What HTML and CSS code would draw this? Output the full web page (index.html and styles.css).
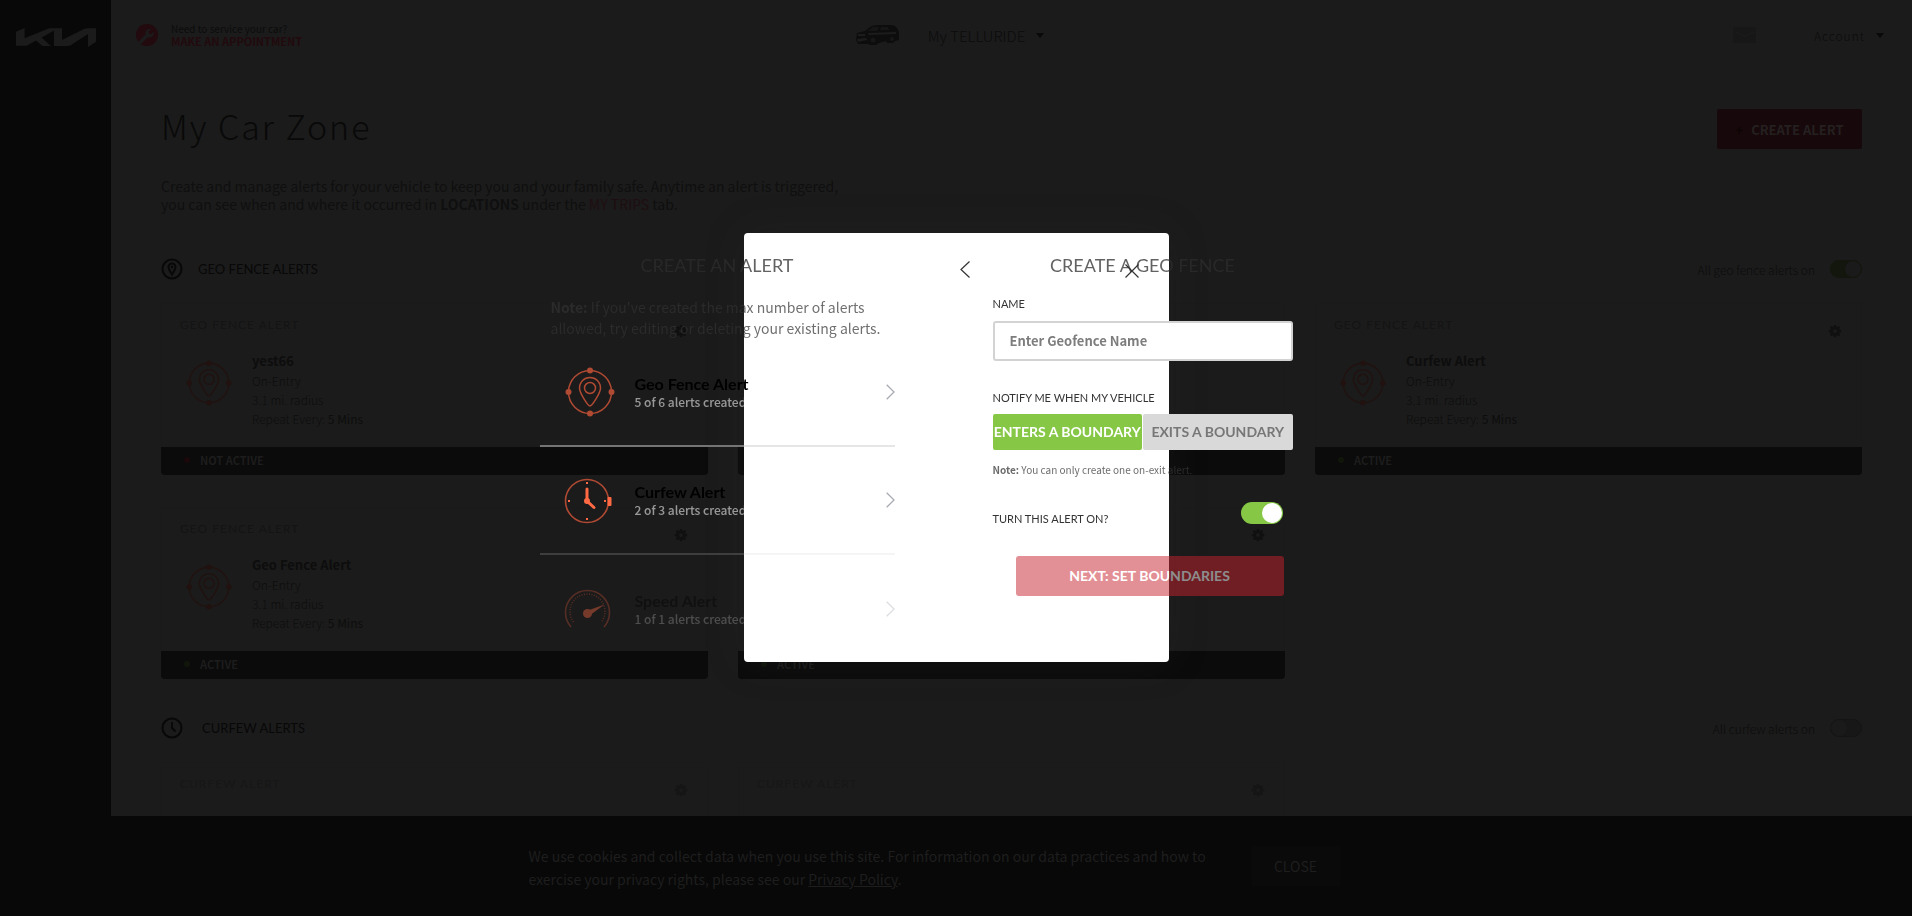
FILE: index.html
```html
<!DOCTYPE html>
<html lang="en">
<head>
<meta charset="utf-8">
<title>My Car Zone</title>
<link rel="stylesheet" href="styles.css">
</head>
<body>
<svg class="sprite" aria-hidden="true">
  <symbol id="gear" viewBox="0 0 16 16"><path fill="currentColor" fill-rule="evenodd" d="M6.800 1h2.400l.300 1.900 1.100.500 1.600-1.200 1.700 1.700-1.200 1.600.500 1.100 1.900.300v2.400l-1.900.300-.500 1.100 1.200 1.600-1.700 1.700-1.600-1.200-1.100.500-.300 1.900H6.800l-.300-1.900-1.100-.500-1.600 1.200-1.700-1.700 1.200-1.600-.500-1.100L.900 9.300V6.900l1.900-.300.500-1.100-1.200-1.600 1.700-1.700 1.600 1.200 1.100-.500zM8 5.900a2.200 2.200 0 1 0 0 4.400 2.200 2.200 0 0 0 0-4.400z"/></symbol>
  <symbol id="fence" viewBox="0 0 50 50"><g fill="none" stroke="currentColor" stroke-width="1.500"><circle cx="25" cy="25" r="21.500"/><path d="M25 39C23 39 14.500 26 14.500 21a10.500 10.500 0 0 1 21 0C35.500 26 27 39 25 39z"/><circle cx="25" cy="21" r="5.500"/></g><g class="dots"><circle cx="25" cy="3.500" r="3"/><circle cx="25" cy="46.500" r="3"/><circle cx="3.500" cy="25" r="3"/><circle cx="46.500" cy="25" r="3"/></g></symbol>
</svg>

<div class="page">
  <aside class="sidebar">
    <svg class="logo" viewBox="0 0 80 20" role="img" aria-label="Kia"><path fill="currentColor" d="M0 3.700 8.600 0V10.300L32 .700Q33 .300 34 .300H46V12L68 1Q70 .300 72 .300H80V13.700L72 19V6L55 17Q53.500 18 52 18H38V2.500L25.700 9.500 34.700 18H26.500L20 12.500 12 17Q11 17.700 10 17.700H0z"/></svg>
  </aside>
  <div class="body">
    <header class="top">
      <div class="service">
        <svg class="wrench" viewBox="0 0 22 22"><circle cx="11" cy="11" r="11" fill="#220a0e"/><path d="M2 18 9.500 10.500A4.500 4.500 0 0 1 15 5l-2.500 2.700.500 2 2 .500 2.700-2.500A4.500 4.500 0 0 1 12 13.200L4.500 20.500z" fill="#1b1b1b"/></svg>
        <div><p class="need">Need to service your car?</p><a href="#" class="appt">MAKE AN APPOINTMENT</a></div>
      </div>
      <button class="vehicle" type="button">
        <svg class="car" viewBox="0 0 44 20"><path fill="#0d0d0d" d="M1 8 9 6 14 2Q17 0 22 0H35Q39 0 41 3L43 7V15L39 16 37 18H31L30 16 23 18 20 20H14L12 19 2 19 0 15z"/><path fill="#1c1c1c" d="M2 9H9V11H2zM1 14 10 13 11 15 2 17zM12 8 40 7V9L13 10z"/><path fill="#161616" d="M12 6 17 2H23L21 6zM25 2H32L33 5H24z"/><circle cx="17" cy="15" r="2.500" fill="#171717"/><circle cx="36" cy="14" r="2" fill="#171717"/></svg>
        <span>My TELLURIDE</span><i class="caret"></i>
      </button>
      <div class="user">
        <svg class="mail" viewBox="0 0 23 16"><rect width="23" height="16" fill="#171717"/><path d="M2 5 11.500 9 21 5" fill="none" stroke="#1c1c1c"/></svg>
        <button class="account" type="button"><span>Account</span><i class="caret"></i></button>
      </div>
    </header>

    <main>
      <div class="titlebar">
        <h1>My Car Zone</h1>
        <button class="create" type="button"><span class="plus">+</span>CREATE ALERT</button>
      </div>
      <p class="intro">Create and manage alerts for your vehicle to keep you and your family safe. Anytime an alert is triggered,<br>you can see when and where it occurred in <b>LOCATIONS</b> under the <a href="#">MY TRIPS</a> tab.</p>

      <section>
        <div class="sechead">
          <svg viewBox="0 0 22 22"><g fill="none" stroke="#080808" stroke-width="2"><circle cx="11" cy="11" r="9.500"/><path d="M11 16.500C9.500 14 7.500 11.500 7.500 9a3.500 3.500 0 0 1 7 0c0 2.500-2 5-3.500 7.500z"/></g><circle cx="11" cy="9" r="1.200" fill="#080808"/></svg>
          <h2>GEO FENCE ALERTS</h2>
          <label class="all"><span>All geo fence alerts on</span><input type="checkbox" class="switch dim" checked></label>
        </div>
        <div class="cards">
          <article class="card">
            <div class="cardtop"><h3>GEO FENCE ALERT</h3><svg class="gear"><use href="#gear"/></svg></div>
            <div class="info"><svg class="fence"><use href="#fence"/></svg><div><h4>yest66</h4><p>On-Entry</p><p>3.1 mi. radius</p><p>Repeat Every: <b>5 Mins</b></p></div></div>
            <div class="status off">NOT ACTIVE</div>
          </article>
          <article class="card">
            <div class="cardtop"></div>
            <div class="info"></div>
            <div class="status"></div>
          </article>
          <article class="card">
            <div class="cardtop"><h3>GEO FENCE ALERT</h3><svg class="gear"><use href="#gear"/></svg></div>
            <div class="info"><svg class="fence"><use href="#fence"/></svg><div><h4>Curfew Alert</h4><p>On-Entry</p><p>3.1 mi. radius</p><p>Repeat Every: <b>5 Mins</b></p></div></div>
            <div class="status">ACTIVE</div>
          </article>
          <article class="card">
            <div class="cardtop"><h3>GEO FENCE ALERT</h3><svg class="gear"><use href="#gear"/></svg></div>
            <div class="info"><svg class="fence"><use href="#fence"/></svg><div><h4>Geo Fence Alert</h4><p>On-Entry</p><p>3.1 mi. radius</p><p>Repeat Every: <b>5 Mins</b></p></div></div>
            <div class="status">ACTIVE</div>
          </article>
          <article class="card">
            <div class="cardtop"><h3></h3><svg class="gear"><use href="#gear"/></svg></div>
            <div class="info"></div>
            <div class="status">ACTIVE</div>
          </article>
        </div>
      </section>

      <section>
        <div class="sechead wide">
          <svg viewBox="0 0 22 22"><g fill="none" stroke="#080808" stroke-width="2"><circle cx="11" cy="11" r="9.500"/><path d="M11 5v6l3.500 3.500"/></g></svg>
          <h2>CURFEW ALERTS</h2>
          <label class="all"><span>All curfew alerts on</span><input type="checkbox" class="switch dim"></label>
        </div>
        <div class="cards faded">
          <article class="card"><div class="cardtop"><h3>CURFEW ALERT</h3><svg class="gear"><use href="#gear"/></svg></div></article>
          <article class="card"><div class="cardtop"><h3>CURFEW ALERT</h3><svg class="gear"><use href="#gear"/></svg></div></article>
        </div>
      </section>
    </main>
  </div>
</div>

<div class="cookies">
  <p>We use cookies and collect data when you use this site. For information on our data practices and how to exercise your privacy rights, please see our <a href="#">Privacy Policy</a>.</p>
  <button type="button">CLOSE</button>
</div>

<div class="overlay">
  <div class="modal" role="dialog" aria-label="Create an alert">
    <button class="close" type="button" aria-label="Close"><svg viewBox="0 0 14 14"><path d="M.500.500l13 13M13.500.500l-13 13"/></svg></button>
    <div class="track">
      <div class="slide pick">
        <h2>CREATE AN ALERT</h2>
        <p class="limit"><b>Note:</b> If you've created the max number of alerts<br>allowed, try editing or deleting your existing alerts.</p>
        <ul>
          <li>
            <svg class="kind first" viewBox="0 0 50 50"><use href="#fence"/></svg>
            <div><h3>Geo Fence Alert</h3><p>5 of 6 alerts created</p></div>
            <svg class="next" viewBox="0 0 9 16"><path d="M.700.700 8 8 .700 15.300"/></svg>
          </li>
          <li class="second">
            <svg class="kind" viewBox="0 0 50 50"><circle class="ring" cx="22" cy="26" r="21.500"/><path class="tick" d="M22 7v2M22 43v2M3 26h2M39 26h2"/><path class="hand" d="M22 14v12l7 6.500"/><circle cx="22" cy="26" r="3" class="fill"/><rect x="42.500" y="22" width="4" height="9" rx="1" class="fill"/></svg>
            <div><h3>Curfew Alert</h3><p>2 of 3 alerts created</p></div>
            <svg class="next" viewBox="0 0 9 16"><path d="M.700.700 8 8 .700 15.300"/></svg>
          </li>
          <li class="third">
            <svg class="kind" viewBox="0 0 50 50"><path class="ring" d="M6 43A22 22 0 1 1 39 43"/><path class="ring" stroke-dasharray="1 1.500" d="M8.500 38A17.500 17.500 0 1 1 36.500 38"/><path class="fill" d="M21.500 27 39.500 20.500 24 32z"/><circle cx="22.500" cy="29.500" r="4.500" class="fill"/></svg>
            <div><h3>Speed Alert</h3><p>1 of 1 alerts created</p></div>
            <svg class="next" viewBox="0 0 9 16"><path d="M.700.700 8 8 .700 15.300"/></svg>
          </li>
        </ul>
      </div>
      <form class="slide geo">
        <button class="back" type="button" aria-label="Back"><svg viewBox="0 0 10 17"><path d="M9.500.500 1 8.500l8.500 8"/></svg></button>
        <h2>CREATE A GEO FENCE</h2>
        <label class="lab" for="gname">NAME</label>
        <input class="text" id="gname" type="text" placeholder="Enter Geofence Name">
        <p class="lab notify">NOTIFY ME WHEN MY VEHICLE</p>
        <div class="pair"><button class="on" type="button">ENTERS A BOUNDARY</button><button type="button">EXITS A BOUNDARY</button></div>
        <p class="tiny"><b>Note:</b> You can only create one on-exit alert.</p>
        <div class="turn"><label class="lab" for="aon">TURN THIS ALERT ON?</label><input type="checkbox" id="aon" class="switch" checked></div>
        <button class="go" type="button">NEXT: SET BOUNDARIES</button>
      </form>
    </div>
  </div>
</div>
</body>
</html>
```
FILE: styles.css
```css
* { box-sizing: border-box; margin: 0; padding: 0; }
:root {
  --text: "Noto Sans CJK SC", "Noto Sans", sans-serif;
  --head: Lato, "Noto Sans", sans-serif;
}
body { background: #1b1b1b; color: #0c0c0c; font-family: var(--text); font-size: 13px; line-height: 19px; }
button, input { font: inherit; color: inherit; border: 0; background: none; }
a { color: inherit; text-decoration: none; }
ul { list-style: none; }
.sprite { position: absolute; width: 0; height: 0; }

.page { display: flex; height: 100vh; overflow: hidden; }
.sidebar { flex: 0 0 111px; background: #080808; padding: 28px 15px 0 16px; }
.logo { display: block; width: 80px; height: 20px; color: #1b1b1b; }
.body { flex: 1; min-width: 0; }

.top { display: grid; grid-template-columns: 6fr auto 7fr; align-items: center; height: 70px; padding: 0 28px 0 25px; }
.service { display: flex; align-items: center; gap: 13px; font-size: 10px; line-height: 13px; }
.need { color: #0c0c0c; }
.wrench { width: 22px; height: 22px; }
.appt { color: #220a0e; font-size: 11px; font-weight: 700; display: block; }
.vehicle { display: flex; align-items: center; font-size: 15px; font-weight: 300; }
.car { width: 44px; height: 20px; margin-right: 28px; }
.caret { border: 4px solid transparent; border-top: 5px solid #090909; border-bottom: 0; margin-left: 11px; }
.user { justify-self: end; display: flex; align-items: center; gap: 58px; }
.mail { width: 23px; height: 16px; }
.account { display: flex; align-items: center; font-size: 12px; font-weight: 300; letter-spacing: 1px; }

main { padding: 30px 50px 0; }
.titlebar { display: flex; justify-content: space-between; align-items: center; padding-top: 2px; }
h1 { font-size: 34px; line-height: 48px; padding-bottom: 6px; font-weight: 300; letter-spacing: 2px; color: #090909; }
.create { background: #17080b; color: #252020; width: 145px; height: 40px; border-radius: 2px; font-size: 13px; font-weight: 700; }
.plus { color: #0d0405; margin-right: 8px; }
.intro { padding-top: 21px; font-size: 14px; line-height: 18px; color: #0f0f0f; }
.intro a { color: #1f0e11; }

.sechead { display: flex; align-items: center; height: 22px; margin-top: 45px; gap: 15px; }
.sechead.wide { gap: 19px; margin-top: 38px; }
.sechead svg { width: 22px; height: 22px; }
.sechead h2 { font: 400 13px/20px var(--head); color: #080808; flex: 1; }
.all { display: flex; align-items: center; gap: 15px; font-size: 12px; font-weight: 300; }
.switch { appearance: none; width: 42px; height: 22px; border-radius: 11px; background: #ccc; padding: 1px; display: flex; }
.switch::before { content: ""; width: 20px; height: 20px; border-radius: 50%; background: #fff; }
.switch:checked { background: #86c846; justify-content: flex-end; }
.switch.dim { width: 32px; height: 18px; background: #171717; border: 1px solid #141414; padding: 0; }
.switch.dim::before { width: 16px; height: 16px; background: #1a1a1a; }
.switch.dim:checked { background: #12160c; border-color: #12160c; }

.cards { display: grid; grid-template-columns: repeat(3, 1fr); gap: 32px 30px; margin-top: 23px; }
.card { height: 172px; display: flex; flex-direction: column; border: 1px solid #1a1a1a; border-bottom: 0; }
.cardtop { display: flex; justify-content: space-between; padding: 12px 19px 0 18px; height: 36px; }
.card h3 { font: 400 12px/18px var(--head); letter-spacing: 1px; color: #141414; }
.gear { width: 14px; height: 14px; color: #101010; margin-top: 8px; }
.info { flex: 1; display: flex; gap: 20px; padding: 10px 24px 0; color: #0d0d0d; font-size: 12px; font-weight: 300; }
.info h4 { font-size: 13px; line-height: 21px; }
.fence { width: 46px; height: 46px; margin-top: 10px; color: #211210; }
.dots { fill: currentColor; }
.status { margin: 0 -1px; height: 28px; background: #0b0b0b; border-radius: 0 0 4px 4px; color: #1d1d1d; font-size: 11px; line-height: 16px; font-weight: 700; display: flex; align-items: center; gap: 10px; padding: 0 0 3px 23px; }
.status::before { content: ""; width: 6px; height: 6px; border-radius: 50%; background: #11160b; }
.off::before { background: #1a080b; }
.faded { opacity: .5; }

.cookies { position: fixed; left: 0; right: 0; bottom: 0; height: 100px; background: #080808; color: #1e1e1e; display: flex; justify-content: center; align-items: center; gap: 20px; font-size: 14px; line-height: 23px; padding-right: 44px; }
.cookies p { width: 703px; padding-top: 4px; }
.cookies a { text-decoration: underline; }
.cookies button { width: 88px; height: 40px; background: #0a0a0a; }

.overlay { position: fixed; inset: 0; display: grid; place-items: center; padding-bottom: 22px; }
.modal { position: relative; width: 425px; height: 429px; background: #fff; border-radius: 4px; box-shadow: 0 0 40px rgba(50, 50, 50, .2); }
.close { position: absolute; right: 30px; top: 31px; width: 14px; height: 14px; }
.close svg, .back svg { display: block; fill: none; stroke: #333; stroke-width: 1.2; }
.close svg { width: 14px; height: 14px; }
.track { position: absolute; right: -186px; top: 0; display: flex; width: 850px; }
.slide { width: 425px; padding: 20px 35px 0; }
.slide h2 { font: 400 18px/24px var(--head); color: rgba(45, 45, 45, .75); text-align: center; }
.limit { padding: 20px 0 0 11px; white-space: nowrap; font-size: 14px; line-height: 21px; color: rgba(50, 50, 50, .7); }
.pick li { display: flex; align-items: center; height: 108px; border-bottom: 2px solid rgba(206, 206, 206, .5); }
.pick li > div { flex: 1; padding-left: 20px; }
.pick h3 { font: 700 16px/20px var(--head); color: #000; }
.pick li p { font-size: 12px; line-height: 16px; font-weight: 500; color: rgba(255, 255, 255, .55); }
.pick .second { border-color: rgba(206, 206, 206, .2); }
.pick .third { opacity: .4; border: 0; }
.kind { width: 50px; height: 50px; margin-left: 25px; color: #b04a33; overflow: visible; }
.kind .fill, .first .dots { fill: #ff6a45; }
.ring { fill: none; stroke: #b04a33; stroke-width: 1.6; }
.tick, .hand { fill: none; stroke: #ff6a45; stroke-width: 2; }
.hand { stroke-width: 3; stroke-linecap: round; }
.next { width: 9px; height: 16px; fill: none; stroke: #a8abb2; stroke-width: 1.3; }

.geo { position: relative; padding: 20px 62px 0 63px; }
.back { position: absolute; left: 30px; top: 28px; }
.back svg { width: 10px; height: 17px; }
.lab { display: block; font: 400 11px/16px var(--head); color: #333; }
.geo h2 { margin: 0 -20px 19px; }
.text { display: block; width: 100%; height: 40px; margin-top: 9px; border: 2px solid #d3d3d3; border-radius: 3px; background: #fff; padding: 0 15px; color: #555; font-weight: 700; }
.text::placeholder { color: #7d7d7d; opacity: 1; }
.notify { margin-top: 29px; }
.pair { display: grid; grid-template-columns: 1fr 1fr; margin-top: 8px; gap: 1px; }
.pair button { height: 36px; background: #d9d9d9; color: #777; font: 700 14px/20px var(--head); border-radius: 2px; white-space: nowrap; }
.pair .on { background: #86c846; color: #fff; }
.tiny { font-size: 10px; line-height: 16px; margin-top: 12px; color: rgba(56, 56, 56, .75); }
.turn { display: flex; justify-content: space-between; margin: 24px 10px 0 0; }
.turn .lab { padding-top: 9px; }
.go { display: block; width: 268px; height: 40px; margin: 29px 0 0 23px; border-radius: 3px; background: #c8202e; color: #fff; opacity: .5; font: 700 14px/20px var(--head); }
```
